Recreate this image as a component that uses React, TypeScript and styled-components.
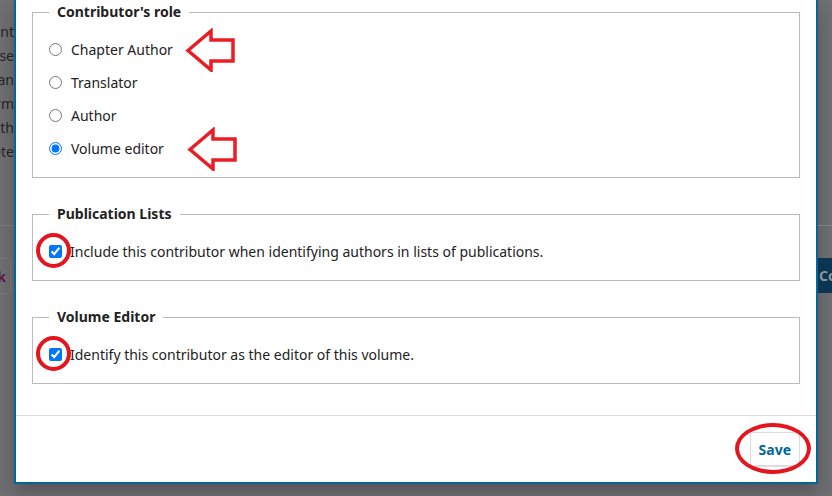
import React from "react";
import styled, { createGlobalStyle } from "styled-components";

const GlobalStyle = createGlobalStyle`
  html, body {
    margin: 0;
    padding: 0;
    overflow: hidden;
  }
  body {
    font-family: "Noto Sans", "Open Sans", sans-serif;
    font-size: 14px;
    color: #222;
  }
`;

const Backdrop = styled.div`
  width: 832px;
  height: 496px;
  display: grid;
  grid-template-columns: 14px 804px 14px;
  background: #707073;
  overflow: hidden;
`;

const Strip = styled.div<{ $align: "start" | "end" }>`
  display: flex;
  flex-direction: column;
  align-items: ${(p) => (p.$align === "end" ? "flex-end" : "flex-start")};
  padding-top: 20px;
  overflow: hidden;
  color: #262626;
`;

const PageLine = styled.div`
  display: flex;
  justify-content: flex-end;
  width: 100%;
  white-space: nowrap;
  line-height: 24px;
`;

const PageRule = styled.div<{ $top: number }>`
  width: 100%;
  height: 1px;
  margin-top: ${(p) => p.$top}px;
  background: #7f7f83;
`;

const PageButtonRow = styled.div<{ $align: "start" | "end" }>`
  display: flex;
  justify-content: ${(p) => (p.$align === "end" ? "flex-end" : "flex-start")};
  width: 100%;
  margin-top: 32px;
`;

const GhostButton = styled.div`
  flex-shrink: 0;
  height: 34px;
  margin-right: 3px;
  padding: 0 4px 0 12px;
  display: flex;
  align-items: center;
  border: 1px solid #7b7b7f;
  border-radius: 3px;
  color: #5a1a44;
  font-weight: 700;
  white-space: nowrap;
`;

const DarkButton = styled.div`
  flex-shrink: 0;
  height: 35px;
  padding: 0 12px 0 1px;
  display: flex;
  align-items: center;
  background: #0b3552;
  color: #8d949b;
  font-weight: 700;
  white-space: nowrap;
`;

const Modal = styled.div`
  display: flex;
  flex-direction: column;
  align-self: start;
  height: 484px;
  box-sizing: border-box;
  background: #fff;
  border: 2px solid #006798;
  border-top: none;
  box-shadow: 0 8px 18px rgba(0, 0, 0, 0.25);
`;

const ModalBody = styled.div`
  flex: 1;
  display: flex;
  flex-direction: column;
  gap: 26px;
  padding: 2px 16px 0;
`;

const Fieldset = styled.fieldset`
  margin: 0;
  padding: 11px 16px 12px;
  border: 1px solid #bbb;
  min-width: 0;
`;

const Legend = styled.legend`
  padding: 0 8px;
  font-weight: 700;
  line-height: 20px;
  color: #222;
`;

const OptionList = styled.div`
  display: flex;
  flex-direction: column;
`;

const OptionRow = styled.label`
  display: flex;
  align-items: center;
  height: 33px;
  line-height: 20px;
  color: #222;
`;

const Radio = styled.input.attrs({ type: "radio" })`
  width: 13px;
  height: 13px;
  margin: 0 9px 0 0;
`;

const CheckRing = styled.span`
  position: relative;
  display: inline-flex;
  margin-right: 8px;

  &::after {
    content: "";
    position: absolute;
    left: -13px;
    top: -12px;
    width: 27px;
    height: 27px;
    border: 4px solid #e3161f;
    border-radius: 50%;
    pointer-events: none;
  }
`;

const Checkbox = styled.input.attrs({ type: "checkbox" })`
  width: 13px;
  height: 13px;
  margin: 0;
`;

const Arrow = styled.svg<{ $gap: number }>`
  flex-shrink: 0;
  margin: -8px 0 -8px ${(p) => p.$gap}px;
`;

const Footer = styled.div`
  display: flex;
  justify-content: flex-end;
  padding: 16px;
  border-top: 1px solid #ddd;
`;

const SaveWrap = styled.span`
  position: relative;
  display: inline-flex;

  &::after {
    content: "";
    position: absolute;
    left: -15px;
    top: -9px;
    width: 68px;
    height: 43px;
    border: 4px solid #e3161f;
    border-radius: 50%;
    pointer-events: none;
  }
`;

const SaveButton = styled.button`
  height: 34px;
  padding: 0 8px;
  background: #fff;
  border: 1px solid #ddd;
  border-radius: 3px;
  box-shadow: 0 1px 0 #ddd;
  font-family: "Noto Sans", "Open Sans", sans-serif;
  font-size: 14px;
  font-weight: 700;
  color: #006798;
`;

const PointerArrow = ({ gap }: { gap: number }) => (
  <Arrow $gap={gap} width="50" height="44" viewBox="0 0 50 44">
    <polygon
      points="3,22.5 26,3 26,12 48,12 48,33 26,33 26,42"
      fill="none"
      stroke="#ec1c24"
      strokeWidth="3.5"
      strokeLinejoin="miter"
    />
  </Arrow>
);

const roles = [
  { label: "Chapter Author", checked: false, arrow: 12 },
  { label: "Translator", checked: false, arrow: 0 },
  { label: "Author", checked: false, arrow: 0 },
  { label: "Volume editor", checked: true, arrow: 23 },
];

const leftLines = ["content", "these", "can", "form", "in th", "complete"];

const App = () => {
  return (
    <>
      <GlobalStyle />
      <Backdrop>
        <Strip $align="end">
          {leftLines.map((line) => (
            <PageLine key={line}>{line}</PageLine>
          ))}
          <PageRule $top={61} />
          <PageButtonRow $align="end">
            <GhostButton>Back</GhostButton>
          </PageButtonRow>
        </Strip>

        <Modal>
          <ModalBody>
            <Fieldset>
              <Legend>Contributor's role</Legend>
              <OptionList>
                {roles.map((role) => (
                  <OptionRow key={role.label}>
                    <Radio name="role" defaultChecked={role.checked} />
                    {role.label}
                    {role.arrow > 0 && <PointerArrow gap={role.arrow} />}
                  </OptionRow>
                ))}
              </OptionList>
            </Fieldset>

            <Fieldset>
              <Legend>Publication Lists</Legend>
              <OptionRow>
                <CheckRing>
                  <Checkbox defaultChecked />
                </CheckRing>
                Include this contributor when identifying authors in lists of
                publications.
              </OptionRow>
            </Fieldset>

            <Fieldset>
              <Legend>Volume Editor</Legend>
              <OptionRow>
                <CheckRing>
                  <Checkbox defaultChecked />
                </CheckRing>
                Identify this contributor as the editor of this volume.
              </OptionRow>
            </Fieldset>
          </ModalBody>

          <Footer>
            <SaveWrap>
              <SaveButton>Save</SaveButton>
            </SaveWrap>
          </Footer>
        </Modal>

        <Strip $align="start">
          <PageRule $top={205} />
          <PageButtonRow $align="start">
            <DarkButton>Continue</DarkButton>
          </PageButtonRow>
        </Strip>
      </Backdrop>
    </>
  );
};

export default App;
